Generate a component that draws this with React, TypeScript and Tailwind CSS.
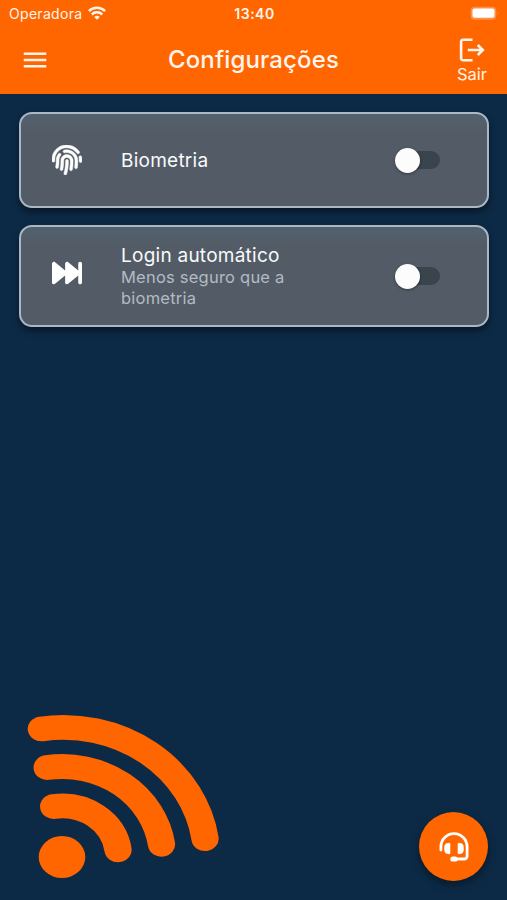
import type { ReactNode } from "react";
import { FaFingerprint } from "react-icons/fa";
import { FaForwardFast } from "react-icons/fa6";
import { MdMenu } from "react-icons/md";

interface SettingCardProps {
  icon: ReactNode;
  title: string;
  subtitle?: string;
  className: string;
}

function SettingCard({ icon, title, subtitle, className }: SettingCardProps) {
  return (
    <section
      className={`flex items-center rounded-[13px] border-2 border-[#aab7c5] bg-[#535c66] bg-linear-to-b from-[#52616f] to-[#535c66] to-20% pl-[31px] pr-[47px] shadow-[0_4px_7px_rgba(0,0,0,0.45)] ${className}`}
    >
      <div className="w-[69px] shrink-0 text-white">{icon}</div>
      <div className="w-[200px]">
        <h2 className="whitespace-nowrap text-[19px] leading-[23px] tracking-[0.25px] text-[#f8fafc]">{title}</h2>
        {subtitle ? <p className="text-[16.5px] leading-[20.5px] tracking-[0.22px] text-[#b3bac4]">{subtitle}</p> : null}
      </div>
      <Toggle />
    </section>
  );
}

function Toggle() {
  return (
    <button type="button" role="switch" aria-checked="false" className="ml-auto flex h-[26px] w-[45px] items-center">
      <span className="flex h-[18px] w-full items-center rounded-full bg-[#3a444d]">
        <span className="size-[25px] shrink-0 rounded-full bg-[#fcfcfc] shadow-[0_1px_3px_rgba(0,0,0,0.4)]" />
      </span>
    </button>
  );
}

function WifiIcon() {
  return (
    <svg width="18" height="14" viewBox="0 0 18 14" fill="none" stroke="#fff5ee" strokeWidth="2.5">
      <path d="M0.9 5.1a11.5 11.5 0 0 1 16.2 0" />
      <path d="M3.8 8.5a7.4 7.4 0 0 1 10.4 0" />
      <path d="M9 13.8 6.2 11a4 4 0 0 1 5.6 0z" fill="#fff5ee" stroke="none" />
    </svg>
  );
}

function LogoutIcon() {
  return (
    <svg width="26" height="24" viewBox="0 0 26 24" fill="none" stroke="#fff5ee" strokeWidth="2.6">
      <path d="M13.5 1.8H3.9a1.8 1.8 0 0 0-1.8 1.8v16.8a1.8 1.8 0 0 0 1.8 1.8h9.6" />
      <path d="M8.8 12h15M18.8 7l5 5-5 5" />
    </svg>
  );
}

function HeadsetIcon() {
  return (
    <svg width="30" height="30" viewBox="0 0 30 30" fill="none">
      <path
        d="M1.9 18v-3.2a13.1 13.1 0 0 1 26.2 0v9.4a2.8 2.8 0 0 1-2.8 2.8H15"
        stroke="white"
        strokeWidth="2.8"
        strokeLinecap="round"
      />
      <path d="M11 11.3v10.4H9.2a3.6 3.6 0 0 1-3.6-3.6v-3.2a3.6 3.6 0 0 1 3.6-3.6zM19 11.3v10.4h1.8a3.6 3.6 0 0 0 3.6-3.6v-3.2a3.6 3.6 0 0 0-3.6-3.6z" fill="white" stroke="white" strokeWidth="0.6" strokeLinejoin="round" />
      <rect x="11.3" y="24.4" width="7.4" height="5.2" rx="2.6" fill="white" />
    </svg>
  );
}

function SignalLogo() {
  return (
    <svg width="194" height="166" viewBox="27 713 194 166" fill="none">
      <g transform="scale(1.1 1)" stroke="#ff6600" strokeWidth="24.8" strokeLinecap="round">
        <path d="M48.8 806.5A51 51 0 0 1 107.3 849.8" />
        <path d="M42.9 767.6A91 91 0 0 1 146.8 844.3" />
        <path d="M37.6 728.9A130.2 130.2 0 0 1 186.4 838.7" />
      </g>
      <ellipse cx="62" cy="857" rx="23.3" ry="21" fill="#ff6600" />
    </svg>
  );
}

export default function App() {
  return (
    <div className="flex h-[900px] w-[507px] flex-col overflow-hidden bg-[#0c2a46] font-['Inter','Liberation_Sans',sans-serif]">
      <header className="h-[94px] shrink-0 bg-[#ff6600] text-[#fff5ee]">
        <div className="grid h-[26px] grid-cols-3 items-center pl-[9px] pr-[7px]">
          <div className="flex items-center gap-[6px] text-[14px] tracking-[0.3px]">
            Operadora
            <WifiIcon />
          </div>
          <div className="text-center text-[14px] font-semibold tracking-[0.5px]">13:40</div>
          <svg className="justify-self-end" width="30" height="15" viewBox="0 0 30 15">
            <rect x="0.7" y="0.7" width="25.6" height="13" rx="3.8" fill="#ff8f47" />
            <rect x="2.5" y="2.5" width="22" height="9.2" rx="2" fill="#ffffff" />
            <path d="M27.7 5.5q2 1.6 0 3.4z" fill="#ff8f47" />
          </svg>
        </div>
        <div className="grid h-[68px] grid-cols-[80px_1fr_80px] items-center">
          <button type="button" aria-label="Menu" className="ml-5 w-[30px]">
            <MdMenu size={30} />
          </button>
          <h1 className="text-center text-[24px] font-medium leading-8 tracking-[0.15px]">Configurações</h1>
          <button type="button" className="ml-[20px] mt-px flex w-[50px] flex-col items-center text-[16.5px] leading-[20px]">
            <LogoutIcon />
            <span className="mt-0.5">Sair</span>
          </button>
        </div>
      </header>

      <main className="flex flex-col gap-[17px] pl-[19px] pr-[18px] pt-[18px]">
        <SettingCard
          className="h-24"
          icon={<FaFingerprint size={30} stroke="currentColor" strokeWidth={8} />}
          title="Biometria"
        />
        <SettingCard
          className="h-[102px]"
          icon={<FaForwardFast size={30} className="-mt-1.5" />}
          title="Login automático"
          subtitle="Menos seguro que a biometria"
        />
      </main>

      <footer className="mt-auto flex items-end justify-between pb-[19px] pl-[27px] pr-[19px]">
        <div className="-mb-px pb-[3px]">
          <SignalLogo />
        </div>
        <button
          type="button"
          aria-label="Suporte"
          className="grid size-[69px] place-items-center rounded-full bg-[#ff6600] text-white shadow-[0_4px_8px_rgba(0,0,0,0.4)]"
        >
          <HeadsetIcon />
        </button>
      </footer>
    </div>
  );
}
